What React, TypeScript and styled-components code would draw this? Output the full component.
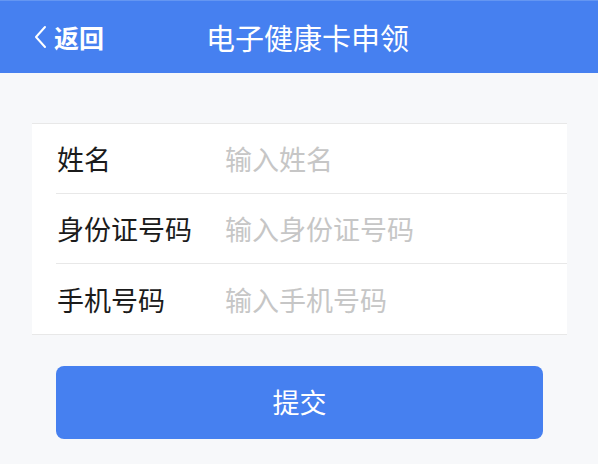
import React from "react";
import styled, { createGlobalStyle } from "styled-components";

const $blue = "#4680f0";
const $pageBg = "#f7f8fa";
const $lineColor = "#e8e8e8";
const $textColor = "#1b1b1b";
const $placeholderColor = "#c6c6c6";
const $fontStack = `"Noto Sans CJK SC", "Noto Sans", sans-serif`;

const GlobalStyle = createGlobalStyle`
  html, body {
    margin: 0;
    padding: 0;
    background: ${$pageBg};
    font-family: ${$fontStack};
  }
  * {
    box-sizing: border-box;
  }
`;

const Page = styled.div`
  width: 598px;
  min-height: 464px;
  background: ${$pageBg};
`;

const Header = styled.header`
  height: 73px;
  background: ${$blue};
  border-top: 1px solid #6496f2;
  display: flex;
  align-items: center;
  padding-left: 33px;
  color: #fff;
`;

const BackButton = styled.button`
  display: flex;
  align-items: center;
  gap: 7px;
  background: none;
  border: none;
  padding: 0;
  color: #fff;
  font-family: ${$fontStack};
  font-size: 25px;
  font-weight: 700;
  line-height: 1;
  cursor: pointer;
  & svg {
    display: block;
  }
`;

const Title = styled.h1`
  margin: 0 0 0 102px;
  font-size: 29px;
  font-weight: 400;
  line-height: 1;
`;

const Content = styled.main`
  padding-top: 50px;
`;

const FormCard = styled.form`
  margin: 0 31px 0 32px;
  background: #fff;
  border-top: 1px solid ${$lineColor};
  border-bottom: 1px solid ${$lineColor};
`;

const Field = styled.label`
  display: block;
  padding-left: 24px;
`;

interface FieldInnerProps {
  $last?: boolean;
}

const FieldInner = styled.div<FieldInnerProps>`
  height: 70px;
  display: flex;
  align-items: center;
  padding-left: 1px;
  ${({ $last }: FieldInnerProps) =>
    !$last && `border-bottom: 1px solid ${$lineColor};`}
`;

const FieldLabel = styled.span`
  width: 168px;
  flex-shrink: 0;
  font-size: 27px;
  color: ${$textColor};
  line-height: 1;
`;

const FieldInput = styled.input`
  flex: 1;
  min-width: 0;
  border: none;
  outline: none;
  background: transparent;
  padding: 0;
  font-family: ${$fontStack};
  font-size: 27px;
  color: ${$textColor};
  &::placeholder {
    color: ${$placeholderColor};
  }
`;

const SubmitButton = styled.button`
  display: flex;
  align-items: center;
  justify-content: center;
  width: 487px;
  height: 73px;
  margin: 31px 0 0 56px;
  padding: 0 0 3px;
  border: none;
  border-radius: 8px;
  background: ${$blue};
  color: #fff;
  font-family: ${$fontStack};
  font-size: 27px;
  cursor: pointer;
`;

const ChevronLeft = () => (
  <svg width="14" height="24" viewBox="0 0 14 24">
    <polyline
      points="12,2 3,12 12,22"
      fill="none"
      stroke="#fff"
      strokeWidth="2"
      strokeLinecap="round"
      strokeLinejoin="round"
    />
  </svg>
);

const fields = [
  { label: "姓名", placeholder: "输入姓名", type: "text" },
  { label: "身份证号码", placeholder: "输入身份证号码", type: "text" },
  { label: "手机号码", placeholder: "输入手机号码", type: "tel" }
];

const App: React.FC = () => (
  <>
    <GlobalStyle />
    <Page>
      <Header>
        <BackButton type="button">
          <ChevronLeft />
          返回
        </BackButton>
        <Title>电子健康卡申领</Title>
      </Header>
      <Content>
        <FormCard onSubmit={e => e.preventDefault()}>
          {fields.map((f, i) => (
            <Field key={f.label}>
              <FieldInner $last={i === fields.length - 1}>
                <FieldLabel>{f.label}</FieldLabel>
                <FieldInput type={f.type} placeholder={f.placeholder} />
              </FieldInner>
            </Field>
          ))}
        </FormCard>
        <SubmitButton type="button">提交</SubmitButton>
      </Content>
    </Page>
  </>
);

export default App;
